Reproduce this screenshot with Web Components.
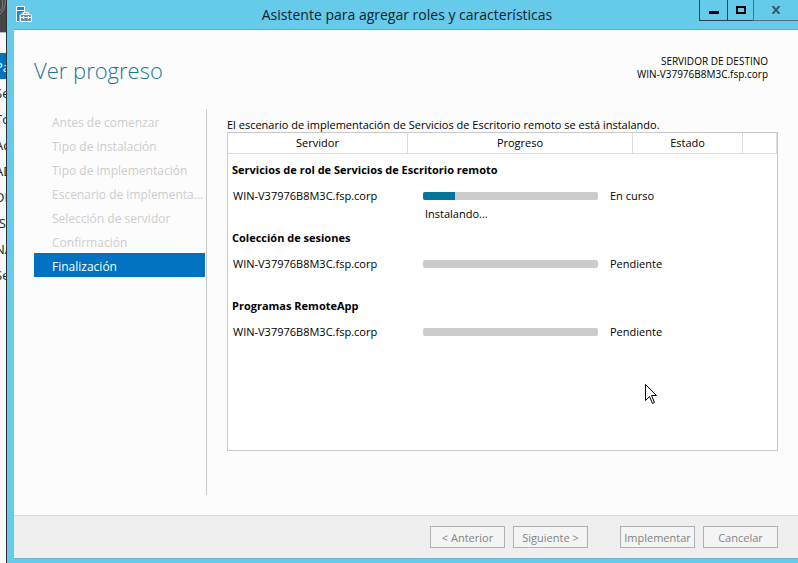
<!DOCTYPE html>
<html lang="es">
<head>
<meta charset="utf-8">
<title>Asistente para agregar roles y características</title>
<style>
  html, body { height: 100%; margin: 0; }
  body {
    font: 12px/18px "Open Sans", "Noto Sans", sans-serif;
    color: #000;
    background: #f8f8f8;
    overflow: hidden;
  }
</style>
</head>
<body>
<desktop-view>
  <server-console slot="behind"></server-console>
  <wizard-window>
    <title-bar slot="title">Asistente para agregar roles y características</title-bar>
    <page-header slot="header">
      Ver progreso
      <span slot="label">SERVIDOR DE DESTINO</span>
      <span slot="server">WIN-V37976B8M3C.fsp.corp</span>
    </page-header>
    <step-list slot="nav">
      <wizard-step>Antes de comenzar</wizard-step>
      <wizard-step>Tipo de instalación</wizard-step>
      <wizard-step>Tipo de implementación</wizard-step>
      <wizard-step>Escenario de implementa...</wizard-step>
      <wizard-step>Selección de servidor</wizard-step>
      <wizard-step>Confirmación</wizard-step>
      <wizard-step current>Finalización</wizard-step>
    </step-list>
    <progress-panel>El escenario de implementación de Servicios de Escritorio remoto se está instalando.</progress-panel>
    <wizard-button slot="footer">&lt; Anterior</wizard-button>
    <wizard-button slot="footer">Siguiente &gt;</wizard-button>
    <wizard-button slot="footer" apart>Implementar</wizard-button>
    <wizard-button slot="footer">Cancelar</wizard-button>
  </wizard-window>
  <mouse-pointer slot="pointer"></mouse-pointer>
</desktop-view>

<script>
  const define = (name, html) => customElements.define(name, class extends HTMLElement {
    constructor() {
      super();
      this.attachShadow({ mode: 'open' }).innerHTML = html;
    }
  });

  define('desktop-view', `
    <style>
      :host { display: grid; grid-template-columns: 6px minmax(0, 1fr); height: 100vh; position: relative; }
    </style>
    <slot name="behind"></slot>
    <slot></slot>
    <slot name="pointer"></slot>
  `);

  define('server-console', `
    <style>
      :host { display: block; overflow: hidden; background: #f8f8f8; font-size: 13px; color: #222; }
      .bar { height: 32px; background: #444; border-bottom: 1px solid #bbb; overflow: hidden; }
      svg { display: block; }
      ul { list-style: none; margin: 20px 0 0; padding: 0; }
      li { height: 26px; line-height: 28px; white-space: nowrap; text-indent: -5px; }
      li.on { background: #0072c0; color: #fff; }
    </style>
    <div class="bar"><svg width="6" height="32" viewBox="0 0 6 32" fill="none" stroke="#888" stroke-width="1"><path d="M2-1C3 4 3 8 0 11M5-1C6 5 4 11 0 14"/></svg></div>
    <ul>
      <li class="on">Pa</li><li>Se</li><li>To</li><li>Ac</li><li>AD</li><li>DH</li><li>IS</li><li>NA</li><li>Se</li>
    </ul>
  `);

  define('wizard-window', `
    <style>
      :host { display: flex; flex-direction: column; min-width: 0; background: #66caea; border-left: 1px solid #2d3133; padding: 0 0 4px 7px; }
      main { flex: 1; min-height: 0; display: flex; flex-direction: column; background: #fcfcfc; border-top: 1px solid #66b1ca; }
      .body { flex: 1; min-height: 0; display: flex; gap: 20px; padding: 0 20px 20px; }
      footer { display: flex; justify-content: flex-end; gap: 8px; padding: 10px 20px; background: #efefef; border-top: 1px solid #d8d8d8; border-bottom: 1px solid #72b4c9; }
    </style>
    <slot name="title"></slot>
    <main>
      <slot name="header"></slot>
      <div class="body"><slot name="nav"></slot><slot></slot></div>
    </main>
    <footer><slot name="footer"></slot></footer>
  `);

  define('title-bar', `
    <style>
      :host { display: grid; grid-template-columns: 1fr auto 1fr; height: 29px; padding-left: 2px; font-size: 14px; line-height: 29px; color: #10222a; }
      .icon { display: block; margin-top: 6px; }
      h1 { margin: 0; font: inherit; white-space: nowrap; }
      .caption { display: flex; justify-content: flex-end; }
      button { box-sizing: border-box; height: 21px; padding: 0; margin: 0; display: grid; place-items: center; background: none; border: solid #22434e; border-width: 0 0 1px 1px; width: 28px; }
      button.max { width: 26px; }
      button.close { width: 45px; border-color: #53707b; }
      svg { display: block; }
    </style>
    <svg class="icon" width="16" height="16" viewBox="0 0 16 16">
      <path d="M.5.5h8v15h-8z" fill="#1c86d8" stroke="#fff"/>
      <path d="M0 4.500h9" stroke="#fff"/>
      <path d="M3 16v-7l3-3h8l2 3v7z" fill="#66caea"/>
      <path d="M4.500 9.500l1-1h9l1 1v6h-11z" fill="#7391a6" stroke="#fff"/>
      <path d="M7.500 8V6.500h5V8M4 11.500h12M7.500 10v3M12.500 10v3" fill="none" stroke="#fff"/>
    </svg>
    <h1><slot></slot></h1>
    <div class="caption">
      <button class="min" aria-label="Minimizar"><svg width="10" height="14"><path d="M0 8h10v3H0z"/></svg></button>
      <button class="max" aria-label="Maximizar"><svg width="10" height="14"><path d="M1 4h8v6H1z" fill="none" stroke="#000" stroke-width="2"/></svg></button>
      <button class="close" aria-label="Cerrar"><svg width="10" height="14"><path d="M1 3h2l2 2.500L7 3h2v1L6.500 7 9 10v1H7L5 8.500 3 11H1v-1l2.500-3L1 4z" fill="#355f70"/></svg></button>
    </div>
  `);

  define('page-header', `
    <style>
      :host { display: flex; justify-content: space-between; align-items: flex-start; height: 79px; box-sizing: border-box; padding: 25px 30px 0 20px; }
      h2 { margin: 0; font-size: 22px; line-height: 30px; font-weight: 300; color: #1c7494; }
      p { margin: 0; text-align: right; font-size: 10px; line-height: 13px; }
      p span { display: block; }
    </style>
    <h2><slot></slot></h2>
    <p><span><slot name="label"></slot></span><span><slot name="server"></slot></span></p>
  `);

  define('step-list', `
    <style>
      :host { display: block; flex: none; width: 172px; border-right: 1px solid #c8c8c8; }
      nav { width: 171px; }
    </style>
    <nav aria-label="Pasos"><slot></slot></nav>
  `);

  define('wizard-step', `
    <style>
      :host { display: block; height: 24px; line-height: 28px; padding-left: 18px; white-space: nowrap; color: #ccc; }
      :host([current]) { background: #0072c0; color: #fff; }
    </style>
    <slot></slot>
  `);

  define('task-progress', `
    <style>
      :host { display: block; padding: 5px 0; }
      progress { display: block; appearance: none; -webkit-appearance: none; width: 100%; height: 8px; border: 0; border-radius: 2px; overflow: hidden; background: #cbcbcb; }
      progress::-webkit-progress-bar { background: #cbcbcb; }
      progress::-webkit-progress-value { background: #04769a; }
    </style>
    <progress max="100" value="0" aria-label="Progreso"></progress>
  `);

  customElements.define('progress-panel', class extends HTMLElement {
    constructor() {
      super();
      const server = 'WIN-V37976B8M3C.fsp.corp';
      const groups = [
        ['Servicios de rol de Servicios de Escritorio remoto', 18, 'Instalando...', 'En curso'],
        ['Colección de sesiones', 0, '', 'Pendiente'],
        ['Programas RemoteApp', 0, '', 'Pendiente']
      ];
      this.attachShadow({ mode: 'open' }).innerHTML = `
        <style>
          :host { display: flex; flex-direction: column; flex: 1; min-width: 0; padding: 8px 0 44px; font-size: 11px; }
          p { margin: 0; line-height: 15px; white-space: nowrap; }
          .frame { flex: 1; min-height: 0; background: #fff; border: 1px solid #c8c8c8; }
          table { width: 100%; table-layout: fixed; border-collapse: separate; border-spacing: 0; }
          th, td { padding: 0; font-weight: 400; text-align: left; vertical-align: top; white-space: nowrap; }
          thead th { height: 19px; line-height: 20px; text-align: center; border-bottom: 1px solid #dcdcdc; border-right: 1px solid #dcdcdc; }
          tbody th { height: 26px; line-height: 26px; padding-left: 4px; font-weight: 700; }
          tbody tr:last-child td { height: 38px; padding-top: 4px; }
          td.server { padding-left: 5px; }
          td.bar { padding-left: 15px; }
          td.bar span { display: block; padding-left: 2px; }
          td.state { padding-left: 12px; }
          .space td { height: 3px; }
        </style>
        <p><slot></slot></p>
        <div class="frame">
          <table>
            <colgroup><col style="width:180px"><col style="width:190px"><col style="width:35px"><col style="width:110px"><col></colgroup>
            <thead>
              <tr><th scope="col">Servidor</th><th scope="col" colspan="2">Progreso</th><th scope="col">Estado</th><th></th></tr>
              <tr class="space"><td colspan="5"></td></tr>
            </thead>
            ${groups.map(([name, value, note, state]) => `
              <tbody>
                <tr><th scope="rowgroup" colspan="5">${name}</th></tr>
                <tr><td class="server">${server}</td>
                  <td class="bar"><task-progress data-value="${value}"></task-progress>${note ? `<span>${note}</span>` : ''}</td>
                  <td class="state" colspan="3">${state}</td></tr>
              </tbody>`).join('')}
          </table>
        </div>`;
      this.shadowRoot.querySelectorAll('task-progress').forEach(el => {
        el.shadowRoot.querySelector('progress').value = Number(el.dataset.value);
      });
    }
  });

  define('wizard-button', `
    <style>
      :host { display: block; }
      :host([apart]) { margin-left: 24px; }
      button { display: block; box-sizing: border-box; width: 75px; height: 22px; margin: 0; padding: 2px 0 0; font: inherit; font-size: 11px; line-height: 18px; white-space: nowrap; color: #838383; background: #f4f4f4; border: 1px solid #adb2b5; }
    </style>
    <button type="button" disabled><slot></slot></button>
  `);

  define('mouse-pointer', `
    <style>
      :host { position: absolute; left: 645px; top: 384px; pointer-events: none; }
      svg { display: block; }
    </style>
    <svg width="13" height="21" viewBox="0 0 13 21"><path d="M.5.5v16l4-4 3 7 2-1-3-7h5z" fill="#fff" stroke="#000"/></svg>
  `);
</script>
</body>
</html>
